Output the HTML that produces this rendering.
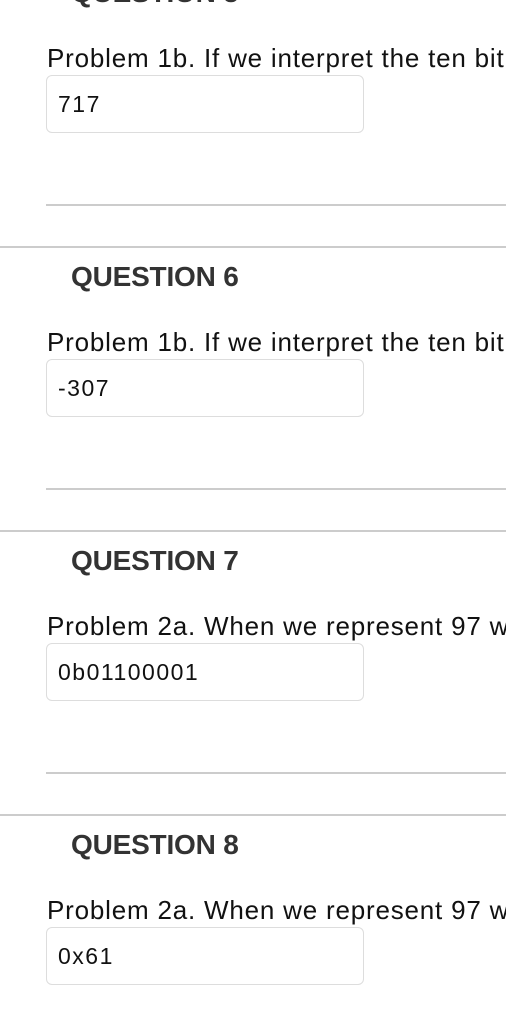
<!DOCTYPE html>
<html><head><style>
body{margin:0;width:506px;height:1032px;overflow:hidden;background:#fff;font-family:"Liberation Sans",sans-serif;position:relative}
.h{position:absolute;left:71px;font-weight:bold;font-size:28px;color:#333;line-height:32px;letter-spacing:-0.2px;white-space:nowrap}
.p{position:absolute;left:47px;font-size:26px;color:#111;line-height:30px;letter-spacing:0.8px;white-space:nowrap}
.box{position:absolute;left:46px;width:318px;height:58px;border:1.5px solid #ddd;border-radius:6px;box-sizing:border-box}
.v{position:absolute;left:58px;font-size:23px;color:#111;line-height:26px;letter-spacing:1.5px}
.l1{position:absolute;left:46px;right:0;height:2px;background:#ccc}
.l2{position:absolute;left:0;right:0;height:2px;background:#ccc}
</style></head><body>
<div class="h" style="top:-23px">QUESTION 5</div>
<div class="p" style="top:43px">Problem 1b. If we interpret the ten bit</div>
<div class="box" style="top:75px"></div>
<div class="v" style="top:91px">717</div>
<div class="l1" style="top:204px"></div>
<div class="l2" style="top:246px"></div>

<div class="h" style="top:261px">QUESTION 6</div>
<div class="p" style="top:327px">Problem 1b. If we interpret the ten bit</div>
<div class="box" style="top:359px"></div>
<div class="v" style="top:375px">-307</div>
<div class="l1" style="top:488px"></div>
<div class="l2" style="top:530px"></div>

<div class="h" style="top:545px">QUESTION 7</div>
<div class="p" style="top:611px">Problem 2a. When we represent 97 wi</div>
<div class="box" style="top:643px"></div>
<div class="v" style="top:659px">0b01100001</div>
<div class="l1" style="top:772px"></div>
<div class="l2" style="top:814px"></div>

<div class="h" style="top:829px">QUESTION 8</div>
<div class="p" style="top:895px">Problem 2a. When we represent 97 wi</div>
<div class="box" style="top:927px"></div>
<div class="v" style="top:943px">0x61</div>
</body></html>
